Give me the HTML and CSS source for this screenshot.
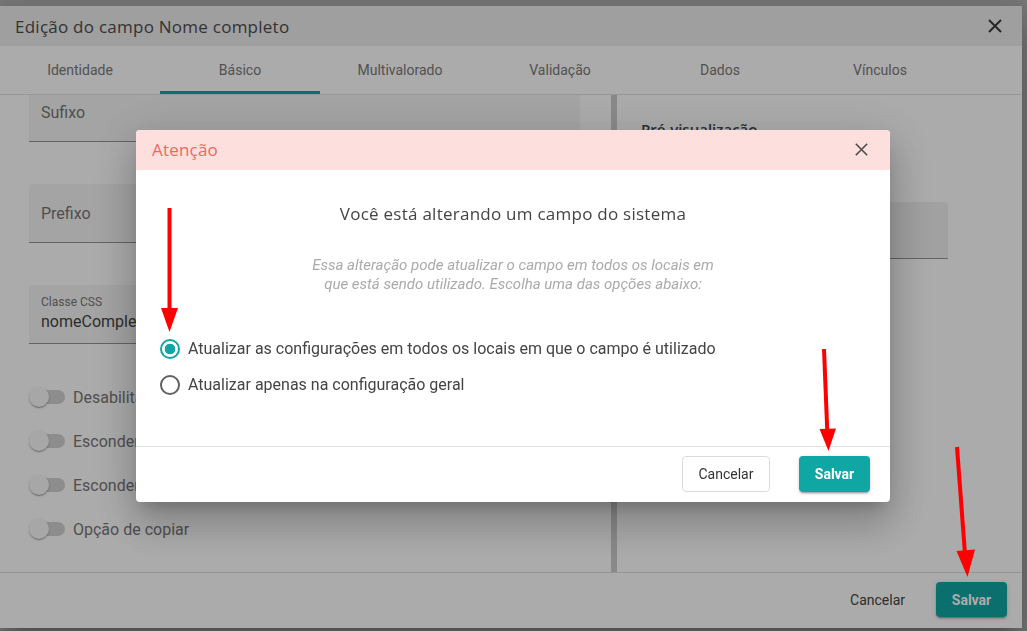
FILE: index.html
```html
<!DOCTYPE html>
<html lang="pt-BR">
<head>
<meta charset="utf-8">
<title>Edição do campo Nome completo</title>
<link rel="stylesheet" href="styles.css">
</head>
<body>
<div class="dialog">
  <header class="dlg-header">
    <h1 class="dlg-title">Edição do campo Nome completo</h1>
    <button class="icon-btn" aria-label="Fechar">
      <svg width="14" height="14" viewBox="0 0 14 14"><path d="M1 1L13 13M13 1L1 13" stroke="#3a3a3a" stroke-width="2" fill="none"/></svg>
    </button>
  </header>
  <nav class="tabs">
    <div class="tab">Identidade</div>
    <div class="tab active">Básico</div>
    <div class="tab">Multivalorado</div>
    <div class="tab">Validação</div>
    <div class="tab">Dados</div>
    <div class="tab">Vínculos</div>
  </nav>
  <div class="dlg-body">
    <section class="col-left">
      <div class="scroll">
        <div class="field"><span class="placeholder">Sufixo</span></div>
        <div class="field"><span class="placeholder">Prefixo</span></div>
        <div class="field field-filled"><span class="float-label">Classe CSS</span><span class="value">nomeCompleto</span></div>
        <div class="toggles">
          <label class="toggle"><span class="track"><span class="thumb"></span></span><span>Desabilitado</span></label>
          <label class="toggle"><span class="track"><span class="thumb"></span></span><span>Esconder no formulário</span></label>
          <label class="toggle"><span class="track"><span class="thumb"></span></span><span>Esconder na listagem</span></label>
          <label class="toggle"><span class="track"><span class="thumb"></span></span><span>Opção de copiar</span></label>
        </div>
      </div>
    </section>
    <div class="splitter"></div>
    <section class="col-right">
      <h2 class="preview-title">Pré-visualização</h2>
      <div class="field preview-field"></div>
    </section>
  </div>
  <footer class="dlg-footer">
    <button class="btn-text">Cancelar</button>
    <button class="btn-primary">Salvar</button>
  </footer>
</div>

<div class="backdrop">
  <div class="modal">
    <header class="modal-header">
      <h3 class="modal-title">Atenção</h3>
      <button class="icon-btn" aria-label="Fechar">
        <svg width="13" height="13" viewBox="0 0 13 13"><path d="M0.8 0.8L12.2 12.2M12.2 0.8L0.8 12.2" stroke="#4a4a4a" stroke-width="1.6" fill="none"/></svg>
      </button>
    </header>
    <div class="modal-body">
      <p class="modal-heading">Você está alterando um campo do sistema</p>
      <p class="modal-note">Essa alteração pode atualizar o campo em todos os locais em<br>que está sendo utilizado. Escolha uma das opções abaixo:</p>
      <div class="radio-group">
        <label class="radio"><span class="radio-circle checked"></span><span>Atualizar as configurações em todos os locais em que o campo é utilizado</span></label>
        <label class="radio"><span class="radio-circle"></span><span>Atualizar apenas na configuração geral</span></label>
      </div>
    </div>
    <footer class="modal-footer">
      <button class="btn-outline">Cancelar</button>
      <button class="btn-primary">Salvar</button>
    </footer>
  </div>
</div>

<svg class="annotations" width="1027" height="631" viewBox="0 0 1027 631">
  <g fill="#ff0000" stroke="#ff0000">
    <line x1="169.5" y1="208" x2="169.5" y2="312" stroke-width="4"/>
    <polygon points="161,308 178,308 169.5,332" stroke="none"/>
    <line x1="824" y1="349" x2="827.3" y2="432" stroke-width="4"/>
    <polygon points="819.5,429 836,428.5 828.5,451" stroke="none"/>
    <line x1="957" y1="447" x2="965" y2="554" stroke-width="4"/>
    <polygon points="956.5,551 975,549.5 967.5,577" stroke="none"/>
  </g>
</svg>
</body>
</html>
```

FILE: styles.css
```css
* { box-sizing: border-box; }

html, body {
  margin: 0;
  height: 631px;
  overflow: hidden;
}

body {
  background: #b4b4b4;
  font-family: Roboto, "Liberation Sans", sans-serif;
}

button {
  font-family: Roboto, "Liberation Sans", sans-serif;
  cursor: pointer;
}

.icon-btn {
  border: 0;
  background: none;
  padding: 0;
  display: flex;
  align-items: center;
  justify-content: center;
}

/* ---------- main dialog ---------- */
.dialog {
  width: 1022px;
  height: 622px;
  margin-top: 6px;
  background: #fff;
  display: flex;
  flex-direction: column;
  box-shadow: 0 11px 15px -7px rgba(0,0,0,.2), 0 24px 38px 3px rgba(0,0,0,.14), 0 9px 46px 8px rgba(0,0,0,.12);
}

.dlg-header {
  height: 40px;
  flex: none;
  background: #ededed;
  display: flex;
  align-items: center;
  justify-content: space-between;
  padding: 0 20px 0 15px;
}

.dlg-title {
  margin: 0;
  font-family: "Open Sans", sans-serif;
  font-weight: 400;
  font-size: 17px;
  letter-spacing: 0.25px;
  color: #4c4c4c;
}

.tabs {
  height: 49px;
  flex: none;
  display: flex;
  border-bottom: 1px solid #e2e2e2;
}

.tab {
  width: 160px;
  display: flex;
  align-items: center;
  justify-content: center;
  font-size: 14px;
  color: #7a7a7a;
}

.tab.active {
  box-shadow: inset 0 -3px 0 #0fa6a3;
}

.dlg-body {
  flex: 1;
  min-height: 0;
  display: flex;
}

.col-left {
  width: 611px;
  overflow: hidden;
}

.scroll {
  margin-top: -12px;
  padding: 0 31px 0 29px;
}

.field {
  height: 59px;
  background: #f5f5f5;
  border-bottom: 1px solid #959595;
  border-radius: 4px 4px 0 0;
  padding: 0 12px;
  display: flex;
  align-items: center;
}

.field + .field { margin-top: 42px; }

.placeholder {
  font-size: 16px;
  color: #777;
}

.field-filled {
  flex-direction: column;
  align-items: flex-start;
  justify-content: flex-start;
  padding-top: 10px;
}

.float-label {
  font-size: 12px;
  line-height: 14px;
  color: #777;
}

.value {
  margin-top: 3px;
  font-size: 16px;
  line-height: 20px;
  color: #444;
}

.toggles {
  margin-top: 41px;
  display: flex;
  flex-direction: column;
  gap: 20px;
}

.toggle {
  height: 24px;
  display: flex;
  align-items: center;
  gap: 8px;
  font-size: 16px;
  color: #777;
}

.track {
  width: 36px;
  height: 14px;
  border-radius: 7px;
  background: #d2d2d2;
  position: relative;
  flex: none;
}

.thumb {
  position: absolute;
  left: 0;
  top: -3px;
  width: 20px;
  height: 20px;
  border-radius: 50%;
  background: #fafafa;
  box-shadow: 0 2px 1px -1px rgba(0,0,0,.2), 0 1px 1px 0 rgba(0,0,0,.14), 0 1px 3px 0 rgba(0,0,0,.12);
}

.splitter {
  width: 6px;
  flex: none;
  background: #cdcdcd;
}

.col-right {
  flex: 1;
  padding: 24px 0 0 24px;
}

.preview-title {
  margin: 0;
  font-family: "Open Sans", sans-serif;
  font-weight: 600;
  font-size: 15px;
  line-height: 20px;
  color: #444;
}

.preview-field {
  width: 307px;
  height: 57px;
  margin-top: 63px;
  background: #f0f0f0;
}

.dlg-footer {
  height: 56px;
  flex: none;
  border-top: 1px solid #dedede;
  display: flex;
  align-items: center;
  justify-content: flex-end;
  padding: 0 15px 2px 0;
  gap: 15px;
}

.btn-text {
  height: 36px;
  padding: 0 16px;
  border: 0;
  background: none;
  font-size: 14px;
  font-weight: 400;
  color: #444;
}

.btn-primary {
  width: 71px;
  height: 35px;
  border: 0;
  border-radius: 4px;
  background: #0fa6a3;
  color: #fff;
  font-size: 14px;
  font-weight: 700;
  box-shadow: 0 3px 1px -2px rgba(0,0,0,.2), 0 2px 2px 0 rgba(0,0,0,.14), 0 1px 5px 0 rgba(0,0,0,.12);
}

/* ---------- confirmation modal ---------- */
.backdrop {
  position: fixed;
  inset: 0;
  background: rgba(0,0,0,.33);
  display: flex;
  align-items: center;
  justify-content: center;
  padding-right: 1px;
}

.modal {
  width: 754px;
  height: 372px;
  background: #fff;
  border-radius: 4px;
  overflow: hidden;
  display: flex;
  flex-direction: column;
  box-shadow: 0 11px 15px -7px rgba(0,0,0,.2), 0 24px 38px 3px rgba(0,0,0,.14), 0 9px 46px 8px rgba(0,0,0,.12);
}

.modal-header {
  height: 40px;
  flex: none;
  background: #fde0dd;
  display: flex;
  align-items: center;
  justify-content: space-between;
  padding: 0 22px 0 16px;
}

.modal-title {
  margin: 0;
  font-family: "Open Sans", sans-serif;
  font-weight: 400;
  font-size: 17px;
  letter-spacing: 0.2px;
  color: #f2665e;
}

.modal-body {
  flex: 1;
  padding-top: 33px;
}

.modal-heading {
  margin: 0;
  text-align: center;
  font-family: "Open Sans", sans-serif;
  font-size: 17px;
  letter-spacing: 0.25px;
  line-height: 22px;
  color: #444;
}

.modal-note {
  margin: 31px 0 0;
  text-align: center;
  font-style: italic;
  font-size: 15px;
  line-height: 19px;
  color: #aaa;
}

.radio-group {
  margin-top: 45px;
  padding-left: 24px;
  display: flex;
  flex-direction: column;
  gap: 16px;
}

.radio {
  height: 20px;
  display: flex;
  align-items: center;
  gap: 8px;
  font-size: 16px;
  color: #444;
}

.radio-circle {
  width: 20px;
  height: 20px;
  flex: none;
  border: 2px solid #616161;
  border-radius: 50%;
}

.radio-circle.checked {
  border-color: #0fa6a3;
  background: radial-gradient(circle, #0fa6a3 0 5px, transparent 5.6px);
}

.modal-footer {
  height: 56px;
  flex: none;
  border-top: 1px solid #e3e3e3;
  display: flex;
  align-items: center;
  justify-content: flex-end;
  gap: 29px;
  padding-right: 20px;
}

.btn-outline {
  width: 88px;
  height: 36px;
  border: 1px solid #dcdcdc;
  border-radius: 4px;
  background: #fff;
  font-size: 14px;
  color: #333;
}

.modal-footer .btn-primary {
  height: 36px;
}

/* ---------- red annotation arrows ---------- */
.annotations {
  position: fixed;
  left: 0;
  top: 0;
  pointer-events: none;
}
```
